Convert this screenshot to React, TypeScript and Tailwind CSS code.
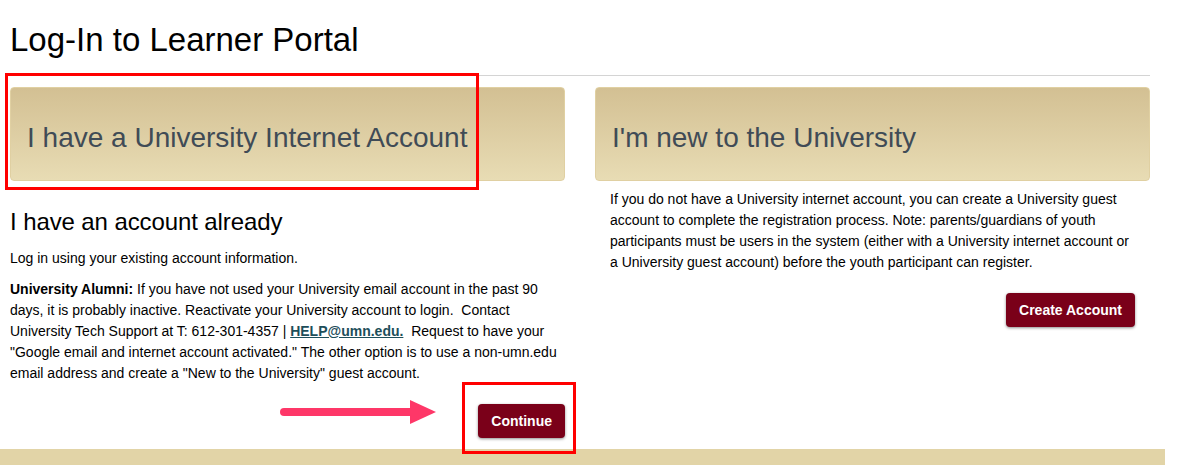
import React from 'react'

const font = { fontFamily: '"Liberation Sans", Arial, sans-serif' }

function PanelHeading({ title }: { title: string }) {
  return (
    <div className="h-[94px] flex items-center px-4 pt-[8px] rounded-[4px] border border-[#e0d0a2] bg-gradient-to-b from-[#d3c093] to-[#e8dcb4]">
      <h3 className="text-[28px] leading-none text-[#404b56]">{title}</h3>
    </div>
  )
}

function MaroonButton({ label }: { label: string }) {
  return (
    <button className="h-[34px] px-[13px] rounded-[4px] bg-[#7a0019] text-white text-[14px] font-bold shadow-[0_1px_3px_rgba(0,0,0,0.45)]">
      {label}
    </button>
  )
}

export default function App() {
  return (
    <div className="w-[1179px] h-[465px] bg-white overflow-hidden text-black" style={font}>
      <div className="relative w-[1165px]">
        <div className="px-[10px] pt-[21px]">
          <h1 className="text-[33px] leading-[37px]">Log-In to Learner Portal</h1>
          <div className="mt-[17px] w-[1140px] border-t border-[#d4d4d4]" />

          <div className="mt-[11px] grid grid-cols-[555px_555px] gap-[30px]">
            <div className="flex flex-col">
              <PanelHeading title="I have a University Internet Account" />
              <h2 className="mt-[27px] text-[24px] leading-[28px] tracking-[-0.1px]">I have an account already</h2>
              <p className="mt-[12px] text-[14px] leading-[21px]">Log in using your existing account information.</p>
              <p className="mt-[10px] text-[14px] leading-[21px]">
                <b>University Alumni:</b> If you have not used your University email account in the past 90 days, it is probably inactive. Reactivate your University account to login.&nbsp; Contact University Tech Support at T: 612-301-4357 |{' '}
                <a className="font-bold underline text-[#1d4e5a]">HELP@umn.edu.</a>&nbsp; Request to have your "Google email and internet account activated." The other option is to use a non-umn.edu email address and create a "New to the University" guest account.
              </p>
              <div className="mt-[20px] flex justify-end">
                <MaroonButton label="Continue" />
              </div>
            </div>

            <div className="flex flex-col">
              <PanelHeading title="I'm new to the University" />
              <p className="mt-[8px] px-[15px] text-[14px] leading-[21px]">
                If you do not have a University internet account, you can create a University guest account to complete the registration process. Note: parents/guardians of youth participants must be users in the system (either with a University internet account or a University guest account) before the youth participant can register.
              </p>
              <div className="mt-[20px] pr-[15px] flex justify-end">
                <MaroonButton label="Create Account" />
              </div>
            </div>
          </div>
        </div>

        <div className="mt-[11px] h-[20px] bg-[#e2d4a7]" />

        {/* annotations */}
        <div className="absolute left-[5px] top-[73px] w-[474px] h-[117px] border-[3px] border-[#ff0000]" />
        <div className="absolute left-[462px] top-[382px] w-[114px] h-[72px] border-[3px] border-[#ff0000]" />
        <svg className="absolute left-[276px] top-[398px]" width="164" height="28" viewBox="0 0 164 28">
          <line x1="8" y1="14" x2="138" y2="14" stroke="#fe3768" strokeWidth="8" strokeLinecap="round" />
          <polygon points="134,2 160,14 134,26" fill="#fe3768" />
        </svg>
      </div>
    </div>
  )
}
